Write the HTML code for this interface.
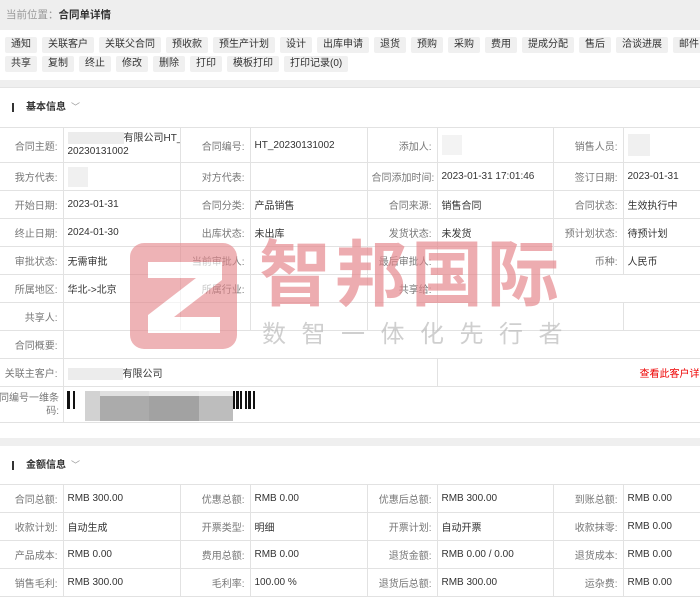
<!DOCTYPE html>
<html><head><meta charset="utf-8"><style>
*{margin:0;padding:0;box-sizing:border-box}
body{width:700px;height:591px;overflow:hidden;background:#fff;font-family:"Liberation Sans","Noto Sans CJK SC",sans-serif;font-size:10px;color:#333;position:relative}
.hd{height:30px;background:#eee;padding-left:6px;line-height:30px;font-size:10.5px;color:#999}
.hd b{color:#333}
.tb{height:50px;padding:7px 0 0 5px}
.row{white-space:nowrap;height:19px;overflow:hidden}
.bt{display:inline-block;background:#f0f0f0;height:16px;line-height:16px;padding:0 6px;margin-right:5px;border-radius:2px;color:#333;font-size:10px}
.band{height:8px;background:#efefef;border-bottom:1px solid #e4e4e4}
.sec{height:39px;line-height:39px;padding-left:14px;font-weight:bold;font-size:10px;position:relative}
.sec:before{content:"";position:absolute;left:12px;top:15px;width:2px;height:9px;background:#333}
.sec span{padding-left:12px}
.sec i{font-style:normal;font-weight:normal;color:#999;margin-left:5px;font-size:9px}
table{border-collapse:collapse;width:700px;table-layout:fixed}
td{border:1px solid #e2e2e2;height:28px;padding:0 4px;vertical-align:middle;overflow:hidden;white-space:nowrap}
td.l{text-align:right;color:#777;padding-right:5px}
td.r0{border-left:none}
.blk{display:inline-block;background:#ececec;vertical-align:middle}
.wm{position:absolute;pointer-events:none}
</style></head><body>
<div class="hd">当前位置：<b>合同单详情</b></div>
<div class="tb">
<div class="row"><span class="bt">通知</span><span class="bt">关联客户</span><span class="bt">关联父合同</span><span class="bt">预收款</span><span class="bt">预生产计划</span><span class="bt">设计</span><span class="bt">出库申请</span><span class="bt">退货</span><span class="bt">预购</span><span class="bt">采购</span><span class="bt">费用</span><span class="bt">提成分配</span><span class="bt">售后</span><span class="bt">洽谈进展</span><span class="bt">邮件</span></div>
<div class="row"><span class="bt">共享</span><span class="bt">复制</span><span class="bt">终止</span><span class="bt">修改</span><span class="bt">删除</span><span class="bt">打印</span><span class="bt">模板打印</span><span class="bt">打印记录(0)</span></div>
</div>
<div class="band"></div>
<div class="sec"><span>基本信息</span><i>﹀</i></div>
<table>
<colgroup><col style="width:63px"><col style="width:117px"><col style="width:70px"><col style="width:117px"><col style="width:70px"><col style="width:116px"><col style="width:70px"><col style="width:77px"></colgroup>
<tr style="height:35px"><td class="l r0">合同主题:</td><td style="line-height:13px;height:35px"><span class="blk" style="width:56px;height:12px;vertical-align:top"></span>有限公司HT_<br>20230131002</td><td class="l">合同编号:</td><td>HT_20230131002</td><td class="l">添加人:</td><td><span class="blk" style="width:20px;height:20px;background:#f3f3f3"></span></td><td class="l">销售人员:</td><td><span class="blk" style="width:22px;height:22px;background:#f0f0f0"></span></td></tr>
<tr><td class="l r0">我方代表:</td><td><span class="blk" style="width:20px;height:20px;background:#f0f0f0"></span></td><td class="l">对方代表:</td><td></td><td class="l">合同添加时间:</td><td>2023-01-31 17:01:46</td><td class="l">签订日期:</td><td>2023-01-31</td></tr>
<tr><td class="l r0">开始日期:</td><td>2023-01-31</td><td class="l">合同分类:</td><td>产品销售</td><td class="l">合同来源:</td><td>销售合同</td><td class="l">合同状态:</td><td>生效执行中</td></tr>
<tr><td class="l r0">终止日期:</td><td>2024-01-30</td><td class="l">出库状态:</td><td>未出库</td><td class="l">发货状态:</td><td>未发货</td><td class="l">预计划状态:</td><td>待预计划</td></tr>
<tr><td class="l r0">审批状态:</td><td>无需审批</td><td class="l">当前审批人:</td><td></td><td class="l">最后审批人:</td><td></td><td class="l">币种:</td><td>人民币</td></tr>
<tr><td class="l r0">所属地区:</td><td>华北-&gt;北京</td><td class="l">所属行业:</td><td></td><td class="l">共享给:</td><td colspan="3"></td></tr>
<tr><td class="l r0">共享人:</td><td></td><td></td><td></td><td></td><td></td><td></td><td></td></tr>
<tr><td class="l r0">合同概要:</td><td colspan="7"></td></tr>
<tr><td class="l r0">关联主客户:</td><td colspan="4"><span class="blk" style="width:55px;height:12px"></span>有限公司</td><td colspan="3" style="text-align:right;color:#e00;padding-right:0">查看此客户详</td></tr>
<tr style="height:36px"><td class="l r0" style="line-height:13px;padding:0;height:36px"><span style="display:block;width:80px;margin-left:-21px;text-align:right">合同编号一维条<br>码:</span></td><td colspan="7" style="position:relative">
<div style="position:absolute;left:3px;top:4px;height:30px;width:200px">
<div style="position:absolute;left:0;top:0;width:3px;height:18px;background:#111"></div>
<div style="position:absolute;left:6px;top:0;width:2px;height:18px;background:#111"></div>
<div style="position:absolute;left:18px;top:0;width:15px;height:30px;background:#d2d2d2"></div>
<div style="position:absolute;left:33px;top:0;width:49px;height:30px;background:#ababab;border-top:5px solid #e0e0e0"></div>
<div style="position:absolute;left:82px;top:0;width:50px;height:30px;background:#a2a2a2;border-top:5px solid #e8e8e8"></div>
<div style="position:absolute;left:132px;top:0;width:34px;height:30px;background:#bdbdbd;border-top:5px solid #eee"></div>
<div style="position:absolute;left:166px;top:0;width:2px;height:18px;background:#111"></div>
<div style="position:absolute;left:169px;top:0;width:3px;height:18px;background:#111"></div>
<div style="position:absolute;left:173px;top:0;width:2px;height:18px;background:#111"></div>
<div style="position:absolute;left:178px;top:0;width:2px;height:18px;background:#111"></div>
<div style="position:absolute;left:181px;top:0;width:3px;height:18px;background:#111"></div>
<div style="position:absolute;left:186px;top:0;width:2px;height:18px;background:#111"></div>
</div></td></tr>
</table>
<div style="height:15px"></div>
<div class="band" style="border-bottom:none"></div>
<div class="sec" style="height:38px"><span>金额信息</span><i>﹀</i></div>
<table>
<colgroup><col style="width:63px"><col style="width:117px"><col style="width:70px"><col style="width:117px"><col style="width:70px"><col style="width:116px"><col style="width:70px"><col style="width:77px"></colgroup>
<tr><td class="l r0">合同总额:</td><td>RMB 300.00</td><td class="l">优惠总额:</td><td>RMB 0.00</td><td class="l">优惠后总额:</td><td>RMB 300.00</td><td class="l">到账总额:</td><td>RMB 0.00</td></tr>
<tr><td class="l r0">收款计划:</td><td>自动生成</td><td class="l">开票类型:</td><td>明细</td><td class="l">开票计划:</td><td>自动开票</td><td class="l">收款抹零:</td><td>RMB 0.00</td></tr>
<tr><td class="l r0">产品成本:</td><td>RMB 0.00</td><td class="l">费用总额:</td><td>RMB 0.00</td><td class="l">退货金额:</td><td>RMB 0.00 / 0.00</td><td class="l">退货成本:</td><td>RMB 0.00</td></tr>
<tr><td class="l r0">销售毛利:</td><td>RMB 300.00</td><td class="l">毛利率:</td><td>100.00 %</td><td class="l">退货后总额:</td><td>RMB 300.00</td><td class="l">运杂费:</td><td>RMB 0.00</td></tr>
</table>
<svg class="wm" style="left:130px;top:243px;opacity:.62" width="107" height="106" viewBox="0 0 107 106">
<rect x="0" y="0" width="107" height="106" rx="14" fill="#e5868b"/>
<path d="M18 19 H92 V37 L44 74 H90 V90 H18 V72 L66 35 H18 Z" fill="#fff"/>
</svg>
<div class="wm" style="left:259px;top:236px;font-size:72px;line-height:80px;font-weight:bold;color:#e5868b;opacity:.68;letter-spacing:4px;white-space:nowrap">智邦国际</div>
<div class="wm" style="left:262px;top:320px;font-size:24px;line-height:30px;color:#bbb;opacity:.7;letter-spacing:15.5px;white-space:nowrap">数智一体化先行者</div>
</body></html>
